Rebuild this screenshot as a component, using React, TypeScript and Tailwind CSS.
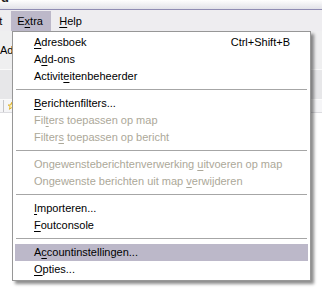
import React from "react";

type Item =
  | { sep: true }
  | { t: string; u: number; sc?: string; d?: boolean; hl?: boolean };

const items: Item[] = [
  { t: "Adresboek", u: 0, sc: "Ctrl+Shift+B" },
  { t: "Add-ons", u: 1 },
  { t: "Activiteitenbeheerder", u: 7 },
  { sep: true },
  { t: "Berichtenfilters...", u: 0 },
  { t: "Filters toepassen op map", u: 3, d: true },
  { t: "Filters toepassen op bericht", u: 6, d: true },
  { sep: true },
  { t: "Ongewensteberichtenverwerking uitvoeren op map", u: 30, d: true },
  { t: "Ongewenste berichten uit map verwijderen", u: 29, d: true },
  { sep: true },
  { t: "Importeren...", u: 0 },
  { t: "Foutconsole", u: 0 },
  { sep: true },
  { t: "Accountinstellingen...", u: 1, hl: true },
  { t: "Opties...", u: 0 },
];

function Label({ t, u }: { t: string; u: number }) {
  return (
    <span className="whitespace-pre">
      {t.slice(0, u)}
      <span className="underline underline-offset-[2px]">{t[u]}</span>
      {t.slice(u + 1)}
    </span>
  );
}

function Star() {
  return (
    <svg width="7" height="8" viewBox="0 0 7 8">
      <path
        d="M3.5 0.5 L4.4 3 L6.8 3 L4.9 4.6 L5.6 7.3 L3.5 5.8 L1.4 7.3 L2.1 4.6 L0.2 3 L2.6 3 Z"
        fill="#fff6c8"
        stroke="#d9a400"
        strokeWidth="0.8"
      />
    </svg>
  );
}

export default function App() {
  return (
    <div className="relative w-[322px] h-[289px] overflow-hidden bg-white font-['Liberation_Sans',Arial,sans-serif] text-[11px] text-black">
      {/* title strip */}
      <div className="h-[9px] overflow-hidden bg-gradient-to-b from-[#fefefe] to-[#e2e2e8] relative">
        <div className="absolute right-[313px] top-[-9px] font-bold text-[13px] leading-[13px] text-[#222]">
          Thunderbird
        </div>
      </div>
      <div className="h-[1px] bg-[#8f8cb3]" />
      {/* menubar */}
      <div className="h-[21px] bg-[#eeedf0] pt-[1px] flex">
        <div className="flex -ml-[38px] h-[20px]">
          <div className="h-[20px] leading-[20px] pl-[6px] pr-[9px]">
            <Label t="Bericht" u={4} />
          </div>
          <div className="h-[20px] leading-[20px] w-[40px] pl-[6px] bg-[#bcb8c9]">
            <Label t="Extra" u={1} />
          </div>
          <div className="h-[20px] leading-[20px] pl-[8px] pr-[7px]">
            <Label t="Help" u={0} />
          </div>
        </div>
      </div>
      {/* toolbar */}
      <div className="h-[38px] bg-[#efeff0] flex items-center">
        <span className="mt-[1px] w-[12px] overflow-hidden whitespace-nowrap">Adresboek</span>
      </div>
      <div className="h-[1px] bg-[#fafafa]" />
      <div className="h-[29px] bg-[#e7e7e9]" />
      <div className="h-[1px] bg-[#fbfbfb]" />
      <div className="h-[13px] bg-[#f5f5f7] border-b border-[#dcdce0] flex items-center">
        <div className="w-[3px]" />
        <div className="w-[1px] h-[12px] bg-[#c4c4c8]" />
        <div className="w-[4px]" />
        <Star />
      </div>

      {/* dropdown menu */}
      <div className="absolute left-[12px] top-[31px] w-[299px] border border-[#979797] bg-white p-[2px] shadow-[3px_3px_3px_rgba(0,0,0,0.45)]">
        {items.map((it, i) =>
          "sep" in it ? (
            <div key={i} className="h-[10px] pt-[4px] px-[1px]">
              <div className="h-[1px] bg-[#a6a6a6]" />
            </div>
          ) : (
            <div
              key={i}
              className={`h-[17px] leading-[17px] pl-[19px] pr-[18px] flex justify-between ${
                it.hl ? "bg-[#bcb8c9]" : ""
              } ${it.d ? "text-[#aca899]" : "text-black"}`}
            >
              <Label t={it.t} u={it.u} />
              {it.sc ? <span>{it.sc}</span> : null}
            </div>
          )
        )}
      </div>
    </div>
  );
}
